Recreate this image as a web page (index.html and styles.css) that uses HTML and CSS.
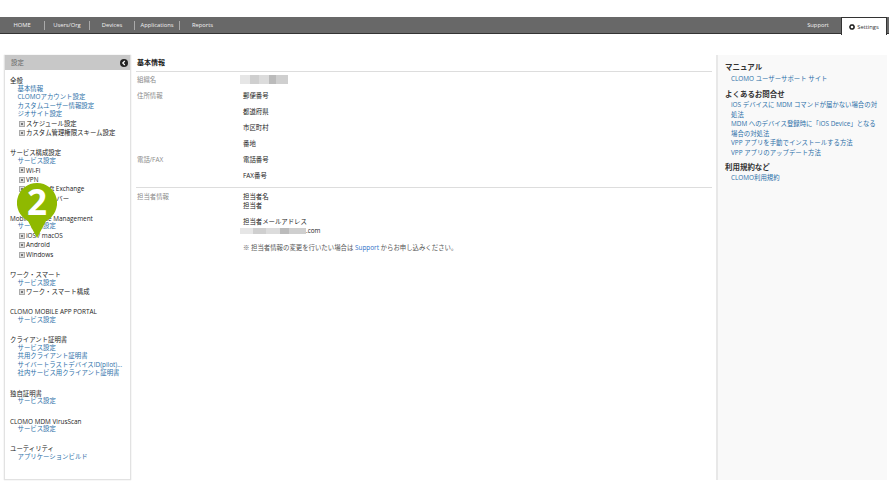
FILE: index.html
```html
<!DOCTYPE html>
<html lang="ja">
<head>
<meta charset="utf-8">
<title>基本情報</title>
<link rel="stylesheet" href="styles.css">
</head>
<body>
<header class="topbar">
  <nav class="nav">
    <a class="nav-item">HOME</a><a class="nav-item">Users/Org</a><a class="nav-item">Devices</a><a class="nav-item">Applications</a><a class="nav-item last">Reports</a>
  </nav>
  <div class="nav-right">
    <a class="nav-support">Support</a>
    <a class="nav-settings"><svg class="gear" viewBox="0 0 10 10"><circle cx="5" cy="5" r="3.4" fill="none" stroke="#222" stroke-width="2.4"/><circle cx="5" cy="5" r="4.4" fill="none" stroke="#222" stroke-width="1" stroke-dasharray="1.4 1.4"/></svg>Settings</a>
  </div>
</header>
<div class="layout">
  <aside class="sidebar">
    <div class="side-head"><span>設定</span>
      <svg class="collapse" viewBox="0 0 8 8"><circle cx="4" cy="4" r="4" fill="#222"/><path d="M4.8 2 2.8 4l2 2" fill="none" stroke="#fff" stroke-width="1.2"/></svg>
    </div>
    <div class="side-body">
      <section class="group">
        <h3>全般</h3>
        <a>基本情報</a><a>CLOMOアカウント設定</a><a>カスタムユーザー情報設定</a><a>ジオサイト設定</a>
        <p class="tree">スケジュール設定</p><p class="tree">カスタム管理権限スキーム設定</p>
      </section>
      <section class="group">
        <h3>サービス構成設定</h3>
        <a>サービス設定</a>
        <p class="tree">Wi-Fi</p><p class="tree">VPN</p><p class="tree">Microsoft Exchange</p><p class="tree">LDAP サーバー</p>
      </section>
      <section class="group">
        <h3>Mobile Device Management</h3>
        <a>サービス設定</a>
        <p class="tree">iOS / macOS</p><p class="tree">Android</p><p class="tree">Windows</p>
      </section>
      <section class="group">
        <h3>ワーク・スマート</h3>
        <a>サービス設定</a>
        <p class="tree">ワーク・スマート構成</p>
      </section>
      <section class="group">
        <h3>CLOMO MOBILE APP PORTAL</h3>
        <a>サービス設定</a>
      </section>
      <section class="group">
        <h3>クライアント証明書</h3>
        <a>サービス設定</a><a>共用クライアント証明書</a><a>サイバートラストデバイスID(pilot)...</a><a>社内サービス用クライアント証明書</a>
      </section>
      <section class="group">
        <h3>独自証明書</h3>
        <a>サービス設定</a>
      </section>
      <section class="group">
        <h3>CLOMO MDM VirusScan</h3>
        <a>サービス設定</a>
      </section>
      <section class="group">
        <h3>ユーティリティ</h3>
        <a>アプリケーションビルド</a>
      </section>
    </div>
    <svg class="pin" viewBox="0 0 40 55"><path d="M20 0a20 20 0 0 1 9 37.900L20 55l-9-17.100A20 20 0 0 1 20 0z" fill="#8fb900"/><text x="20" y="31.500" text-anchor="middle" class="pin-num">2</text></svg>
  </aside>
  <main class="main">
    <h2 class="title">基本情報</h2>
    <div class="row org"><div class="label">組織名</div><div class="mask mask-org"></div></div>
    <div class="row addr">
      <div class="label">住所情報</div>
      <div class="vals"><p>郵便番号</p><p>都道府県</p><p>市区町村</p><p>番地</p></div>
    </div>
    <div class="row tel">
      <div class="label">電話/FAX</div>
      <div class="vals"><p>電話番号</p><p>FAX番号</p></div>
    </div>
    <div class="row person">
      <div class="label">担当者情報</div>
      <div class="vals">
        <p class="pair">担当者名<br>担当者</p>
        <p class="pair">担当者メールアドレス<br><span class="mask mask-mail"></span>.com</p>
        <p class="note">※ 担当者情報の変更を行いたい場合は <a>Support</a> からお申し込みください。</p>
      </div>
    </div>
  </main>
  <aside class="help">
    <h3>マニュアル</h3>
    <a>CLOMO ユーザーサポート サイト</a>
    <h3>よくあるお問合せ</h3>
    <a>iOS デバイスに MDM コマンドが届かない場合の対処法</a>
    <a>MDM へのデバイス登録時に「iOS Device」となる場合の対処法</a>
    <a>VPP アプリを手動でインストールする方法</a>
    <a>VPP アプリのアップデート方法</a>
    <h3>利用規約など</h3>
    <a>CLOMO利用規約</a>
  </aside>
</div>
</body>
</html>
```
FILE: styles.css
```css
* { box-sizing: border-box; }
html, body { margin: 0; height: 100%; }
body {
  background: #fff;
  color: #222;
  font-family: "Open Sans", "Noto Sans CJK JP", sans-serif;
  font-size: 6.4px;
  overflow: hidden;
}
a { color: #2b6fa8; }
p, h2, h3 { margin: 0; font-weight: normal; }

.topbar {
  margin-top: 17px;
  height: 17px;
  background: #686868;
  border-bottom: 1.500px solid #333;
  display: flex;
  justify-content: space-between;
  color: #fff;
  font-size: 5.800px;
}
.nav { display: flex; align-items: center; height: 100%; }
.nav-item {
  color: #f2f2f2;
  width: 45px;
  line-height: 9px;
  text-align: center;
  border-right: 1px solid #aaa;
}
.nav-item.last { border-right: 0; }
.nav-right { display: flex; height: 100%; padding-right: 2px; }
.nav-support { color: #f2f2f2; width: 46px; line-height: 17px; text-align: center; }
.nav-settings {
  width: 46px;
  height: 18px;
  background: #fff;
  border: 1px solid #333;
  border-bottom: 0;
  color: #333;
  display: flex;
  align-items: center;
  justify-content: center;
  gap: 2px;
}
.gear { width: 6px; height: 6px; }

.layout {
  display: flex;
  align-items: flex-start;
  padding: 21px 2px 0 4px;
}
.sidebar {
  position: relative;
  width: 127px;
  height: 425px;
  background: #fff;
  border: 1px solid #e2e2e2;
  border-top: 0;
  box-shadow: 0 0 1px #ccc;
}
.side-head {
  height: 15px;
  background: #c8c8c8;
  display: flex;
  align-items: center;
  justify-content: space-between;
  padding: 0 2px 0 6px;
  color: #666;
}
.collapse { width: 8px; height: 8px; }
.side-body { padding-top: 6px; }
.group { margin-bottom: 10.700px; line-height: 8.600px; }
.group h3 { height: 8.600px; line-height: 10.600px; font-size: 6.400px; color: #222; padding-left: 5px; }
.group a { display: block; height: 8.600px; padding-left: 12.500px; white-space: nowrap; }
.tree {
  display: flex;
  align-items: center;
  height: 9.400px;
  line-height: 9.400px;
  padding-left: 14px;
  color: #222;
  white-space: nowrap;
}
.tree::before {
  content: "";
  width: 4px;
  height: 4px;
  margin-right: 1px;
  background: #777;
  border: 0.500px solid #aaa;
  box-shadow: inset 0 0 0 1px #ddd;
}
.pin { position: absolute; left: 12px; top: 128px; width: 40px; height: 55px; }
.pin-num {
  fill: #fff;
  font-family: "Open Sans", sans-serif;
  font-size: 35px;
  font-weight: 700;
}

.main { width: 576px; margin-left: 5px; }
.title {
  font-size: 7px;
  font-weight: 700;
  line-height: 16px;
  height: 17px;
  color: #222;
  border-bottom: 1px solid #ddd;
  padding-left: 1px;
}
.row { display: flex; padding-left: 1px; }
.label { width: 106px; color: #8a8a8a; line-height: 9px; flex: none; }
.vals { line-height: 9px; }
.vals p { height: 16px; line-height: 9px; }
.org { margin-top: 3px; height: 16px; }
.addr { height: 64px; }
.tel { border-bottom: 1px solid #ddd; height: 33px; }
.person { padding-top: 4px; }
.vals p.pair { height: auto; margin-bottom: 7px; }
.vals p.note { height: auto; color: #555; margin-top: 8px; }
.note a { color: #2b6fc8; }
.mask {
  display: inline-block;
  vertical-align: middle;
  background: linear-gradient(90deg, #e6e6e6 0 20%, #cfcfcf 20% 40%, #dcdcdc 40% 60%, #bbb 60% 75%, #cfcfcf 75% 100%);
}
.mask-org { width: 48px; height: 9px; margin-left: -3px; }
.mask-mail { width: 66px; height: 6px; margin-left: -3px; }

.help {
  width: 171px;
  height: 425px;
  margin-left: 4px;
  background: #f9f9f9;
  border-left: 2px solid #e8e8e8;
  padding: 8px 6px 0 7px;
  line-height: 9.400px;
}
.help h3 { color: #333; font-weight: 700; margin-bottom: 1px; margin-top: 6px; }
.help h3:first-child { margin-top: 0; margin-bottom: 2px; }
.help a { display: block; padding-left: 6px; margin-bottom: 0.100px; }
```
